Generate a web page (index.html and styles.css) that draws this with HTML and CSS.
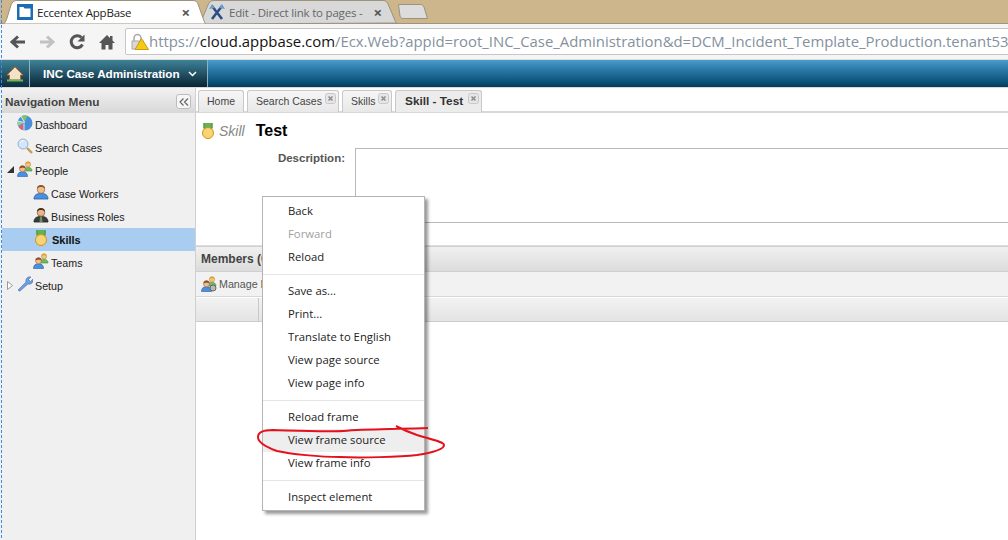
FILE: index.html
```html
<!DOCTYPE html>
<html lang="en">
<head>
<meta charset="utf-8">
<title>Eccentex AppBase</title>
<link rel="stylesheet" href="styles.css">
</head>
<body>
<svg class="defs" width="0" height="0">
  <defs>
    <symbol id="person" viewBox="0 0 16 16">
      <path d="M1 15c0-4 2.500-5.500 7-5.500s7 1.500 7 5.500z" fill="#4a90e0" stroke="#2a5f9e" stroke-width=".8"/>
      <circle cx="8" cy="5.500" r="3.800" fill="#f0bd8e" stroke="#a8683a" stroke-width=".7"/>
      <path d="M4 5c0-3 1.500-4 4-4s4 1 4 4c-1-1.500-2-2-4-2s-3 .5-4 2z" fill="#8a5428"/>
    </symbol>
    <symbol id="suit" viewBox="0 0 16 16">
      <path d="M1 15c0-4 2.500-5.500 7-5.500s7 1.500 7 5.500z" fill="#3c3c38" stroke="#20201e" stroke-width=".8"/>
      <path d="M7 9.500h2l.5 5.500h-3z" fill="#6f8f5f"/>
      <circle cx="8" cy="5.500" r="3.800" fill="#e8b68a" stroke="#7a5030" stroke-width=".7"/>
      <path d="M4 5c0-3 1.500-4 4-4s4 1 4 4c-1-1.500-2-2-4-2s-3 .5-4 2z" fill="#4a3018"/>
    </symbol>
    <symbol id="group" viewBox="0 0 16 16">
      <path d="M7 10c0-2.500 1.500-3.500 4-3.500s4 1 4 3.500z" fill="#6cbc5c" stroke="#3f8a38" stroke-width=".6"/>
      <circle cx="11" cy="3.500" r="2.600" fill="#f2c48c" stroke="#c08a3a" stroke-width=".6"/>
      <path d="M8.500 3c0-1.800 1-2.500 2.500-2.500s2.500.7 2.500 2.500c-1-1-4-1-5 0z" fill="#e0a030"/>
      <path d="M.5 15.500c0-3.500 2-4.800 5-4.800s5 1.300 5 4.800z" fill="#4a90e0" stroke="#2a5f9e" stroke-width=".6"/>
      <circle cx="5.500" cy="7.800" r="3" fill="#f0bd8e" stroke="#a8683a" stroke-width=".6"/>
      <path d="M2.500 7.500c0-2.200 1.200-3 3-3s3 .8 3 3c-1-1-5-1-6 0z" fill="#8a5428"/>
    </symbol>
    <symbol id="medal" viewBox="0 0 14 16">
      <path d="M2.500 0h9v6h-9z" fill="#62b356"/>
      <path d="M2.900 0v5M11.100 0v5" stroke="#3e8a38" stroke-width=".8"/>
      <circle cx="7" cy="10" r="5.500" fill="#f6d673" stroke="#d98f1c" stroke-width="1"/>
    </symbol>
    <symbol id="closex" viewBox="0 0 11 11">
      <rect x=".5" y=".5" width="10" height="10" rx="2" fill="#e6e6e6" stroke="#c8c8c8"/>
      <path d="M3.500 3.500l4 4M7.500 3.500l-4 4" stroke="#8e8e8e" stroke-width="1.600"/>
    </symbol>
  </defs>
</svg>

<div class="tabstrip">
  <div class="ctab ctab-active">
    <svg class="ctab-shape" viewBox="0 0 204 24" width="204" height="24"><path d="M0 24C3 24 4 21 5 18L9 5C10 2 12 .5 15 .5H191C194 .5 195 2 196 4L201 18C202 21 203 24 204 24z" fill="#fff" stroke="#9b927c"/></svg>
    <svg class="ctab-icon" width="16" height="16" viewBox="0 0 16 16"><rect width="16" height="16" fill="#1b6cb2"/><path d="M2.500 3h4l1 1.500h6v8.500h-11z" fill="#fff"/></svg>
    <span class="ctab-title">Eccentex AppBase</span>
    <span class="ctab-x">×</span>
  </div>
  <div class="ctab ctab-back">
    <svg class="ctab-shape" viewBox="0 0 197 24" width="197" height="24"><path d="M0 24L8 5C9 2 11 .5 14 .5H183C186 .5 187 2 188 4L194 18C195 21 196 23 197 23z" fill="#d8d8d8" stroke="#9b927c"/></svg>
    <svg class="ctab-icon" width="16" height="16" viewBox="0 0 16 16"><path d="M3 2l10 13M13 2L3 15" stroke="#2c4e86" stroke-width="2.600"/><path d="M0 5l3-5 3 4M10 4l3-4 3 5" fill="#6d9acb"/></svg>
    <span class="ctab-title ctab-title-fade">Edit - Direct link to pages -</span>
    <span class="ctab-x">×</span>
  </div>
  <svg class="newtab" width="30" height="15" viewBox="0 0 30 15"><path d="M.5 .5H22C24 .5 25 1 26 3L29.500 14.500H5C3 14.500 2.500 13 2 12z" fill="#dcdcdc" stroke="#9b927c"/></svg>
</div>

<div class="toolbar">
  <svg class="tb-icon" width="20" height="20" viewBox="0 0 20 20"><path d="M17 10H6M10 4.500L4 10l6 5.500" fill="none" stroke="#555" stroke-width="3"/></svg>
  <svg class="tb-icon" width="20" height="20" viewBox="0 0 20 20"><path d="M2 10h11M9 4.500l6 5.500-6 5.500" fill="none" stroke="#c2c2c2" stroke-width="3"/></svg>
  <svg class="tb-icon" width="20" height="20" viewBox="0 0 20 20"><path d="M15.500 12.500a6 6 0 1 1-1-7" fill="none" stroke="#555" stroke-width="3"/><path d="M17.500 2.500v7h-7z" fill="#555"/></svg>
  <svg class="tb-icon" width="20" height="20" viewBox="0 0 20 20"><path d="M10 3L2 11h2.500v6.500H8.500V13h3v4.500h4V11H18l-2.500-2.500V4h-2.500v2z" fill="#555"/></svg>
  <div class="address">
    <svg class="lock" width="18" height="18" viewBox="0 0 18 18"><path d="M3 9V5a3.500 3.500 0 0 1 7 0v4" fill="none" stroke="#a9a9a9" stroke-width="1.500"/><rect x="1" y="8" width="11" height="8" fill="#d8d8d8" stroke="#aaa"/><path d="M10.500 5.500L17.500 16.500H4z" fill="#f6c916" stroke="#c99a10"/></svg>
    <span class="url"><span class="url-dim">https://</span>cloud.appbase.com<span class="url-dim">/Ecx.Web?appid=root_INC_Case_Administration&amp;d=DCM_Incident_Template_Production.tenant53</span></span>
  </div>
</div>

<header class="appbar">
  <div class="appbar-home">
    <svg width="18" height="16" viewBox="0 0 18 16"><path d="M9 1L1 9h2.500v5h11V9H17z" fill="#f2e3c8" stroke="#b5682e"/><path d="M2 4l7-3.500L16 4 9 1z" fill="#c8642c"/><path d="M1 14.500h16" stroke="#6fb552" stroke-width="2"/></svg>
  </div>
  <div class="appbar-title">INC Case Administration
    <svg class="chev" width="9" height="6" viewBox="0 0 9 6"><path d="M1 1l3.500 3.500L8 1" fill="none" stroke="#fff" stroke-width="1.500"/></svg>
  </div>
</header>

<div class="main">
  <aside class="side">
    <div class="side-head">
      <span>Navigation Menu</span>
      <span class="collapse"><svg width="10" height="8" viewBox="0 0 10 8"><path d="M4.500 .5L1 4l3.500 3.500M9 .5L5.500 4 9 7.500" fill="none" stroke="#666" stroke-width="1.200"/></svg></span>
    </div>
    <ul class="tree">
      <li class="node">
        <svg class="nicon" width="16" height="16" viewBox="0 0 16 16"><circle cx="8" cy="8" r="7.500" fill="#4a8fdc"/><path d="M7.500 7.500L4 1.200A7.500 7.500 0 0 1 10.500 .8L7.500 7.500z" fill="#7ac36a"/><path d="M6.500 8L.6 6A7.500 7.500 0 0 0 1 11z" fill="#9ecb8e"/><path d="M6.500 9L1.500 12A7.500 7.500 0 0 0 6.500 15.300z" fill="#e8606a"/><path d="M7.500 7.500L4 1.200M7.500 7.500L.6 6M7 8.500V15.500" stroke="#fff" stroke-width=".8"/></svg>
        Dashboard
      </li>
      <li class="node">
        <svg class="nicon" width="16" height="16" viewBox="0 0 16 16"><circle cx="6" cy="6" r="5" fill="#d4e6f8" stroke="#8fb4d8"/><path d="M3.500 4.500a3 3 0 0 1 3-2" fill="none" stroke="#fff"/><path d="M10 10l5 5" stroke="#c49a5c" stroke-width="2.400"/></svg>
        Search Cases
      </li>
      <li class="node">
        <svg class="arrow" width="7" height="7" viewBox="0 0 7 7"><path d="M0 7L7 0v7z" fill="#333"/></svg>
        <svg class="nicon" width="16" height="16"><use href="#group"/></svg>
        People
      </li>
      <li class="node node-sub">
        <svg class="nicon" width="16" height="16"><use href="#person"/></svg>
        Case Workers
      </li>
      <li class="node node-sub">
        <svg class="nicon" width="16" height="16"><use href="#suit"/></svg>
        Business Roles
      </li>
      <li class="node node-sub node-sel">
        <svg class="nicon" width="16" height="16"><use href="#medal"/></svg>
        Skills
      </li>
      <li class="node node-sub">
        <svg class="nicon" width="16" height="16"><use href="#group"/></svg>
        Teams
      </li>
      <li class="node">
        <svg class="arrow" width="6" height="9" viewBox="0 0 6 9"><path d="M.5 .5L5.500 4.500.5 8.500z" fill="#fff" stroke="#999"/></svg>
        <svg class="nicon" width="16" height="16" viewBox="0 0 16 16"><path d="M2 15l-1-1 8-8a4 4 0 0 1 5-5l-2.500 2.500 2 2L16 3a4 4 0 0 1-5 5l-8 7z" fill="#6d9fe0" stroke="#4a74b0" stroke-width=".6"/></svg>
        Setup
      </li>
    </ul>
  </aside>

  <section class="content">
    <div class="tabs">
      <div class="tab">Home</div>
      <div class="tab tab-close tab-search">Search Cases<svg class="tab-x" width="11" height="11"><use href="#closex"/></svg></div>
      <div class="tab tab-close tab-skills">Skills<svg class="tab-x" width="11" height="11"><use href="#closex"/></svg></div>
      <div class="tab tab-close tab-active">Skill - Test<svg class="tab-x" width="11" height="11"><use href="#closex"/></svg></div>
    </div>
    <div class="record">
      <div class="record-head">
        <svg width="14" height="16"><use href="#medal"/></svg>
        <span class="record-type">Skill</span>
        <span class="record-name">Test</span>
      </div>
      <div class="field">
        <label class="field-label">Description:</label>
        <div class="field-box"></div>
      </div>
    </div>
    <div class="panel-head">Members (0)</div>
    <div class="panel-tools">
      <svg width="16" height="16" viewBox="0 0 16 16"><use href="#group"/><circle cx="12" cy="12" r="3" fill="#b8b8b8" stroke="#666"/></svg>
      <span>Manage Members</span>
    </div>
    <div class="grid-head"><div class="grid-cell"></div><div class="grid-rest"></div></div>
  </section>
</div>

<div class="select-line"></div>

<ul class="menu">
  <li class="mi">Back</li>
  <li class="mi mi-off">Forward</li>
  <li class="mi">Reload</li>
  <li class="msep"></li>
  <li class="mi">Save as...</li>
  <li class="mi">Print...</li>
  <li class="mi">Translate to English</li>
  <li class="mi">View page source</li>
  <li class="mi">View page info</li>
  <li class="msep"></li>
  <li class="mi">Reload frame</li>
  <li class="mi mi-hot">View frame source</li>
  <li class="mi">View frame info</li>
  <li class="msep"></li>
  <li class="mi">Inspect element</li>
</ul>

<svg class="scribble" width="200" height="45" viewBox="0 0 200 45">
  <path d="M178 8C150 9 123 9 97 10.700C80 12 57 11 23 10C13 10 8 13 8 17C8 21 13 26 27 31C40 34 70 37 90 37C110 38 150 37 167 35C180 33 194 30 194 25C194 22 180 19 167 15C155 11 150 8 146 6" fill="none" stroke="#e5101c" stroke-width="2"/>
</svg>
</body>
</html>
```
FILE: styles.css
```css
* { box-sizing: border-box; }
html, body { margin: 0; height: 100%; overflow: hidden; }
body { width: 1008px; height: 540px; background: #fff; font-family: "Liberation Sans", sans-serif; display: flex; flex-direction: column; position: relative; }
.defs { position: absolute; }

.tabstrip { height: 24px; background: #cdb68c; border-bottom: 1px solid #9c9480; display: flex; align-items: flex-start; flex: none; padding-left: 2px; }
.ctab { position: relative; height: 24px; display: flex; align-items: center; font-family: "Open Sans", sans-serif; font-size: 11.500px; letter-spacing: -.2px; flex: none; }
.ctab-active { width: 204px; margin-right: -6px; padding: 0 16px 0 15px; z-index: 1; }
.ctab-back { width: 197px; padding: 0 15px 0 9px; }
.ctab-shape { position: absolute; left: 0; top: 0; }
.ctab-icon, .ctab-title, .ctab-x { position: relative; }
.ctab-title { margin-left: 4px; flex: 1; white-space: nowrap; overflow: hidden; color: #222; }
.ctab-title-fade { color: #666; }
.ctab-x { color: #555; font-size: 15px; font-weight: 700; line-height: 1; }
.newtab { margin: 4px 0 0 1px; }

.toolbar { height: 36px; background: #f5f5f5; display: flex; align-items: center; padding-left: 8px; gap: 9.500px; flex: none; border-bottom: 1px solid #dcdcdc; }
.tb-icon { flex: none; }
.address { flex: 1; height: 27px; margin-left: -1px; margin-right: -10px; background: #fff; border: 1px solid #c6c6c6; border-radius: 2px 0 0 2px; display: flex; align-items: center; padding: 0 0 2px 5px; min-width: 0; overflow: hidden; }
.lock { flex: none; margin-top: 2px; }
.url { font-family: "Open Sans", sans-serif; font-size: 14.900px; color: #111; white-space: nowrap; }
.url-dim { color: #84919e; }

.appbar { height: 28px; background: linear-gradient(#4a9ccb, #2a7aa8 35%, #0a4f75 85%, #023a58); display: flex; flex: none; border-bottom: 1px solid #dcdcdc; }
.appbar-home { width: 30px; background: linear-gradient(#3e8298, #0c2c3c); display: flex; align-items: center; justify-content: center; border-right: 1px solid #8fb0c0; }
.appbar-title { width: 178px; padding-left: 13px; background: linear-gradient(#3e8298, #082434); color: #fff; font-size: 11.700px; font-weight: 700; display: flex; align-items: center; gap: 8px; border-right: 1px solid #8fb0c0; white-space: nowrap; }

.main { flex: 1; display: flex; min-height: 0; }
.side { width: 196px; background: #f0f0f0; border-right: 1px solid #d0d0d0; padding-left: 2px; flex: none; }
.side-head { height: 25px; background: linear-gradient(#f2f2f2, #d8d8d8); display: flex; align-items: center; justify-content: space-between; padding: 2px 4px 0 3px; font-size: 11.800px; font-weight: 700; color: #444; }
.collapse { width: 15px; height: 15px; border: 1px solid #bcbcbc; background: #f6f6f6; border-radius: 3px; display: flex; align-items: center; justify-content: center; }
.tree { list-style: none; margin: 0; padding: 0; }
.node { height: 23px; display: flex; align-items: center; padding-left: 15px; gap: 1px; font-size: 10.700px; color: #222; position: relative; }
.node-sub { padding-left: 31px; }
.node-sel { background: #a9cdf0; font-weight: 700; font-size: 11px; color: #111; gap: 2px; }
.arrow { position: absolute; left: 5px; top: 7px; }
.nicon { flex: none; margin: -3px 1px 0 0; }

.content { flex: 1; min-width: 0; display: flex; flex-direction: column; }
.tabs { height: 25px; padding: 2px 0 0 2px; display: flex; gap: 3px; border-bottom: 2px solid #d8d8d8; flex: none; }
.tab { height: 22px; padding: 0 8px 2px; background: linear-gradient(#f6f6f6, #e8e8e8); border: 1px solid #c8c8c8; border-bottom: 0; border-radius: 3px 3px 0 0; font-size: 10.500px; color: #444; display: flex; align-items: center; position: relative; white-space: nowrap; }
.tab-search { width: 92px; }
.tab-skills { width: 50px; }
.tab-active { width: 87px; padding-left: 9px; font-size: 11.800px; font-weight: 700; color: #333; background: #ececec; }
.tab-x { position: absolute; right: 2px; top: 2px; }
.record { height: 133px; flex: none; border-bottom: 1px solid #ddd; }
.record-head { height: 35px; display: flex; align-items: center; padding-left: 5px; }
.record-type { margin-left: 4px; font-size: 14px; font-style: italic; color: #888; }
.record-name { margin-left: 11px; font-size: 16px; font-weight: 700; color: #000; }
.field { display: flex; align-items: flex-start; }
.field-label { width: 149px; text-align: right; font-size: 11.500px; font-weight: 700; color: #555; padding-top: 4px; }
.field-box { flex: 1; margin-left: 10px; height: 75px; border: 1px solid #b8b8b8; border-right: 0; }
.panel-head { height: 26px; background: linear-gradient(#f0f0f0, #dcdcdc); border-top: 1px solid #d0d0d0; border-bottom: 1px solid #d0d0d0; font-size: 12px; font-weight: 700; color: #444; display: flex; align-items: center; padding-left: 5px; flex: none; }
.panel-tools { height: 25px; background: #f2f2f2; border-bottom: 1px solid #d8d8d8; display: flex; align-items: center; padding-left: 5px; gap: 2px; font-size: 10.700px; color: #555; flex: none; }
.grid-head { height: 25px; padding-top: 1px; display: flex; border-bottom: 1px solid #ccc; flex: none; background: #fff; }
.grid-cell { width: 63px; background: linear-gradient(#f2f2f2, #e4e4e4); border-right: 1px solid #c8c8c8; }
.grid-rest { flex: 1; background: linear-gradient(#f2f2f2, #e4e4e4); }

.select-line { position: absolute; left: 1px; top: 0; bottom: 0; width: 1px; background: repeating-linear-gradient(#3d8ce8 0 3px, transparent 3px 5px); z-index: 3; }

.menu { position: absolute; left: 262px; top: 196px; width: 163px; height: 315px; margin: 0; padding: 3px 0; list-style: none; background: #fff; border: 1px solid #b4b4b4; box-shadow: 3px 3px 3px rgba(0,0,0,.4); font-family: "Open Sans", sans-serif; font-size: 11.300px; color: #222; }
.mi { height: 23px; padding: 0 0 2px 25px; display: flex; align-items: center; white-space: nowrap; }
.mi-off { color: #a0a0a0; }
.mi-hot { background: #eeeeee; }
.msep { height: 11px; display: flex; align-items: center; }
.msep::before { content: ""; flex: 1; border-top: 1px solid #e6e6e6; }

.scribble { position: absolute; left: 250px; top: 420px; }
```
